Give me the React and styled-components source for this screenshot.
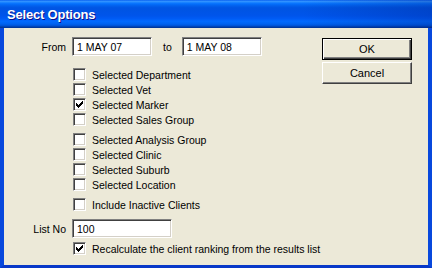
import React from 'react'
import styled, { createGlobalStyle } from 'styled-components'

const GlobalStyle = createGlobalStyle`
    html, body {
        margin: 0;
        padding: 0;
        background: #ECE9D8;
    }
    body {
        font-family: "Liberation Sans", Arial, sans-serif;
        font-size: 10.5px;
        color: #000;
    }
`

const groups = [
    [
        { label: 'Selected Department' },
        { label: 'Selected Vet' },
        { label: 'Selected Marker', checked: true },
        { label: 'Selected Sales Group' },
    ],
    [
        { label: 'Selected Analysis Group' },
        { label: 'Selected Clinic' },
        { label: 'Selected Suburb' },
        { label: 'Selected Location' },
    ],
    [
        { label: 'Include Inactive Clients' },
    ],
]

function CheckMark() {
    return (
        <svg width="7" height="7" viewBox="0 0 7 7">
            <path d="M0 2h1v1h1v1h1V3h1V2h1V1h1V0h1v3h-1v1h-1v1h-1v1h-1v1h-1V6H1V5H0z" fill="#000" />
        </svg>
    )
}

function Check({ label, checked }) {
    return (
        <CheckRow>
            <Box>{checked && <CheckMark />}</Box>
            <span>{label}</span>
        </CheckRow>
    )
}

function App() {
    return (
        <>
            <GlobalStyle />
            <Window>
                <TitleBar>
                    <Title>Select Options</Title>
                </TitleBar>
                <Body>
                    <Form>
                        <Label>From</Label>
                        <DateRow>
                            <TextBox $w={80} defaultValue="1 MAY 07" readOnly />
                            <Joiner>to</Joiner>
                            <TextBox $w={80} defaultValue="1 MAY 08" readOnly />
                        </DateRow>

                        {groups.map((group, i) => (
                            <Group key={i} $top={i === 0 ? 11 : 5}>
                                {group.map((item) => (
                                    <Check key={item.label} {...item} />
                                ))}
                            </Group>
                        ))}

                        <Label $top={7}>List No</Label>
                        <TextBox $w={100} $top={7} defaultValue="100" readOnly />

                        <Group $top={3}>
                            <Check label="Recalculate the client ranking from the results list" checked />
                        </Group>
                    </Form>
                    <Buttons>
                        <Button $default>OK</Button>
                        <Button>Cancel</Button>
                    </Buttons>
                </Body>
            </Window>
        </>
    )
}

const Window = styled.div`
    width: 432px;
    height: 268px;
    display: flex;
    flex-direction: column;
    background: #0A46D8;
`

const TitleBar = styled.div`
    height: 28px;
    flex-shrink: 0;
    display: flex;
    align-items: center;
    padding-left: 7px;
    background:
        linear-gradient(to right, rgba(0, 20, 120, 0) 70%, rgba(0, 20, 120, 0.25) 100%),
        linear-gradient(to bottom, #0058EE 0%, #3593FF 4%, #288EFF 7%, #127DFF 10%, #036FFC 14%, #0262EE 20%, #0057E5 26%, #0054E3 32%, #0055EB 56%, #005BF5 66%, #026AFE 76%, #0062EF 86%, #0052D6 92%, #0040AB 96%, #003092 100%);
`

const Title = styled.span`
    color: #fff;
    font-family: "Liberation Sans", Arial, sans-serif;
    font-weight: bold;
    font-size: 13px;
    letter-spacing: -0.2px;
    text-shadow: 1px 1px #0F1089;
    margin-top: 1px;
`

const Body = styled.div`
    flex: 1;
    display: flex;
    justify-content: space-between;
    background: #ECE9D8;
    border-left: 4px solid #0848DD;
    border-right: 4px solid #0848DD;
    border-bottom: 3px solid #0838C8;
    padding: 9px 16px 0 0;
`

const Form = styled.div`
    display: grid;
    grid-template-columns: 62px auto;
    column-gap: 6px;
    align-content: start;
    align-items: center;
`

const Label = styled.div`
    grid-column: 1;
    text-align: right;
    margin-top: ${(p) => p.$top || 0}px;
`

const DateRow = styled.div`
    grid-column: 2;
    display: flex;
    align-items: center;
`

const Joiner = styled.span`
    margin: 0 10px 0 11px;
`

const TextBox = styled.input`
    grid-column: 2;
    box-sizing: border-box;
    width: ${(p) => p.$w}px;
    height: 19px;
    margin: ${(p) => p.$top || 0}px 0 0 0;
    padding: 0 0 0 4px;
    border: 1px solid;
    border-color: #808080 #fff #fff #808080;
    box-shadow: inset 1px 1px #404040, inset -1px -1px #D4D0C8;
    background: #fff;
    font-family: "Liberation Sans", Arial, sans-serif;
    font-size: 10.5px;
    color: #000;
    outline: none;
`

const Group = styled.div`
    grid-column: 2;
    display: flex;
    flex-direction: column;
    margin-top: ${(p) => p.$top}px;
`

const CheckRow = styled.label`
    display: flex;
    align-items: center;
    gap: 6px;
    height: 15px;
    padding-left: 1px;
    white-space: nowrap;
`

const Box = styled.span`
    box-sizing: border-box;
    width: 13px;
    height: 13px;
    display: flex;
    align-items: center;
    justify-content: center;
    border: 1px solid;
    border-color: #808080 #fff #fff #808080;
    box-shadow: inset 1px 1px #404040, inset -1px -1px #D4D0C8;
    background: #fff;
`

const Buttons = styled.div`
    display: flex;
    flex-direction: column;
    gap: 2px;
    margin-top: 1px;
`

const Button = styled.button`
    box-sizing: border-box;
    width: 90px;
    height: 22px;
    padding: 0;
    background: #ECE9D8;
    font-family: "Liberation Sans", Arial, sans-serif;
    font-size: 11px;
    color: #000;
    border: 1px solid;
    border-color: ${(p) => (p.$default ? '#000' : '#fff #404040 #404040 #fff')};
    box-shadow: ${(p) =>
        p.$default
            ? 'inset 1px 1px #fff, inset -1px -1px #404040, inset -2px -2px #808080'
            : 'inset -1px -1px #808080'};
`

export default App
